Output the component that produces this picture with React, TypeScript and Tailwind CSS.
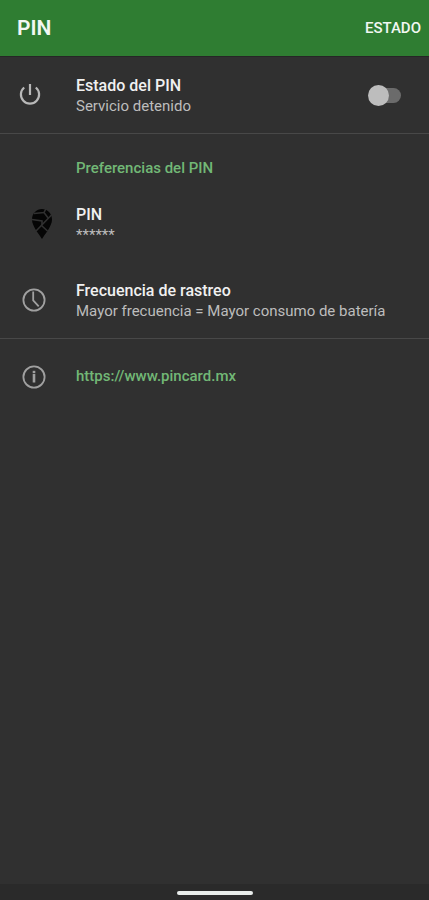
import { useState } from 'react';
import type { ReactNode } from 'react';

function PowerIcon() {
  return (
    <svg viewBox="0 0 24 24" className="w-6 h-6" fill="none" stroke="#b8b8b8" strokeWidth="2.2" aria-hidden="true">
      <path d="M12 1v11" />
      <path d="M6.2 4.500a9.100 9.100 0 1 0 11.600 0" />
    </svg>
  );
}

function ClockIcon() {
  return (
    <svg viewBox="0 0 24 24" className="w-6 h-6" fill="none" stroke="#a0a0a0" strokeWidth="1.8" aria-hidden="true">
      <circle cx="12" cy="12" r="10.6" />
      <path d="M11.2 3.500v8.800l5.500 6" />
    </svg>
  );
}

function InfoIcon() {
  return (
    <svg viewBox="0 0 24 24" className="w-6 h-6" fill="none" stroke="#a0a0a0" strokeWidth="1.8" aria-hidden="true">
      <circle cx="12" cy="12" r="10.6" />
      <path d="M12 8.800v8.700" strokeWidth="2.6" />
      <path d="M12 5.800v2.200" strokeWidth="2.6" />
    </svg>
  );
}

// Map pin split into street blocks
function PinIcon() {
  return (
    <svg viewBox="0 0 22 32" className="w-[22px] h-8" aria-hidden="true">
      <path d="M11 31C8.500 26.500 1 18.500 1 11.500 1 5.500 5.500 1 11 1s10 4.500 10 10.500C21 18.500 13.500 26.500 11 31z" fill="#050505" />
      <g fill="none" stroke="#303030" strokeWidth="1.6">
        <path d="M3 5.500l10-1L15 .5" />
        <path d="M13 4.500l4.500 6" />
        <path d="M20.500 7L5 23" />
        <path d="M1 11.500l10 1.500v4" />
        <path d="M10.500 17.500l6 5.500" />
      </g>
    </svg>
  );
}

type PreferenceProps = {
  icon: ReactNode;
  title: string;
  summary: string;
};

function Preference({ icon, title, summary }: PreferenceProps) {
  return (
    <button type="button" className="flex w-full h-[76px] items-center text-left">
      <span className="flex w-[76px] shrink-0">{icon}</span>
      <span className="flex flex-col pt-[2px]">
        <span className="text-base leading-[21px] font-medium text-[#f0f0f0]">{title}</span>
        <span className="text-[15px] leading-[21px] text-[#bdbdbd]">{summary}</span>
      </span>
    </button>
  );
}

export default function App() {
  const [enabled, setEnabled] = useState(false);

  return (
    <div className="flex min-h-screen flex-col bg-[#303030] font-[Roboto,sans-serif]">
      <header className="flex h-[57px] items-center justify-between border-b border-[#262626] bg-[#2f7d32] pl-[17px] pr-2">
        <h1 className="pt-[2px] text-[21px] font-semibold text-[#f2f7f2]">PIN</h1>
        <button type="button" className="text-[15px] font-medium text-[#f2f7f2]">ESTADO</button>
      </header>

      <main className="flex-1">
        <section className="flex h-[77px] items-center border-b border-[#484848] pr-7">
          <span className="flex w-[76px] shrink-0 pl-[18px]"><PowerIcon /></span>
          <label htmlFor="pin-service" className="flex flex-1 flex-col pt-[2px]">
            <span className="text-base leading-[21px] font-medium text-[#f0f0f0]">Estado del PIN</span>
            <span className="text-[15px] leading-[21px] text-[#bdbdbd]">Servicio detenido</span>
          </label>
          <input
            id="pin-service"
            type="checkbox"
            role="switch"
            checked={enabled}
            onChange={e => setEnabled(e.target.checked)}
            className="flex h-[15px] w-[29px] appearance-none items-center rounded-full bg-[#6b6b6b] before:-mx-1 before:h-[21px] before:w-[21px] before:shrink-0 before:rounded-full before:bg-[#bdbdbd] checked:justify-end checked:before:bg-[#81c784]"
          />
        </section>

        <section className="border-b border-[#484848] pt-6">
          <h2 className="pl-[76px] text-[15px] leading-[21px] font-medium text-[#72b876]">Preferencias del PIN</h2>
          <div className="pt-[7px]">
            <Preference icon={<span className="pl-[31px]"><PinIcon /></span>} title="PIN" summary="******" />
            <Preference icon={<span className="pl-[22px]"><ClockIcon /></span>} title="Frecuencia de rastreo" summary="Mayor frecuencia = Mayor consumo de batería" />
          </div>
        </section>

        <section className="flex h-[75px] items-center">
          <span className="flex w-[76px] shrink-0 pl-[22px]"><InfoIcon /></span>
          <a href="https://www.pincard.mx" className="text-[15px] leading-[21px] font-medium text-[#72b876]">https://www.pincard.mx</a>
        </section>
      </main>

      <footer className="flex h-4 items-center justify-center bg-[#2a2a2a] pt-[2px]">
        <div className="h-1 w-[76px] rounded-sm bg-[#e8ecea]" />
      </footer>
    </div>
  );
}
